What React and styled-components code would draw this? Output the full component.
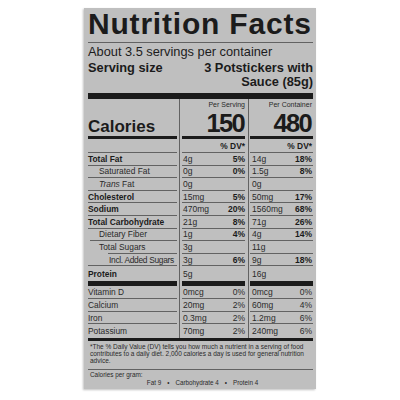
import styled, { createGlobalStyle } from "styled-components";

const GlobalStyle = createGlobalStyle`
  html, body {
    margin: 0;
    padding: 0;
    background: #fff;
  }
  body {
    font-family: "Liberation Sans", Arial, sans-serif;
    color: #1c1c1c;
  }
`;

const INK = "#1b1b1b";
const RULE = "#626262";

const Page = styled.div`
  width: 400px;
  height: 400px;
  box-sizing: border-box;
  padding-top: 8px;
  display: flex;
  justify-content: center;
`;

const Label = styled.section`
  width: 232px;
  height: 381px;
  box-sizing: border-box;
  padding: 1px 3px 0 4px;
  background: #bfbfbf;
  box-shadow: -1px 1px 2px rgba(0, 0, 0, 0.25);
`;

const Title = styled.h1`
  margin: 0;
  padding-bottom: 3px;
  border-bottom: 1px solid ${RULE};
  font-size: 30px;
  line-height: 30px;
  font-weight: 700;
  letter-spacing: 0.8px;
  white-space: nowrap;
  color: ${INK};
`;

const Servings = styled.div`
  margin-top: 2px;
  font-size: 12.8px;
  line-height: 14px;
  white-space: nowrap;
`;

const ServingSize = styled.div`
  margin-top: 2px;
  display: flex;
  justify-content: space-between;
  font-size: 12.8px;
  line-height: 14px;
  font-weight: 700;
  color: ${INK};

  span:last-child {
    text-align: right;
  }
`;

const Bar = styled.div`
  height: ${(p) => p.$h}px;
  margin-top: ${(p) => p.$mt || 0}px;
  background: ${INK};
`;

const Table = styled.div`
  display: flex;
  flex-direction: column;
  background:
    linear-gradient(${RULE}, ${RULE}) 91px 0 / 1px 100% no-repeat,
    linear-gradient(${RULE}, ${RULE}) 160px 0 / 1px 100% no-repeat;
`;

const Row = styled.div`
  display: grid;
  grid-template-columns: 89px 63px 63px;
  column-gap: 5px;
  height: ${(p) => p.$h}px;
`;

const ruled = (p) => {
  const w = p.$rule || 0;
  const color = w > 1 ? INK : RULE;
  return `
    padding-bottom: ${w}px;
    background: linear-gradient(${color}, ${color}) right bottom /
      calc(100% - ${p.$ruleIndent || 0}px) ${w}px no-repeat;
  `;
};

const Name = styled.div`
  box-sizing: border-box;
  display: flex;
  align-items: center;
  padding-left: ${(p) => p.$indent || 0}px;
  font-size: 8.4px;
  font-weight: ${(p) => (p.$bold ? 700 : 400)};
  letter-spacing: ${(p) => p.$tight || 0}px;
  white-space: nowrap;
  color: ${(p) => (p.$bold ? INK : "#2a2a2a")};
  ${ruled}

  i {
    font-style: italic;
  }
`;

const Amount = styled.div`
  box-sizing: border-box;
  display: flex;
  align-items: center;
  justify-content: space-between;
  padding-left: ${(p) => (p.$second ? 2 : 1)}px;
  padding-right: ${(p) => (p.$second ? 1 : 0)}px;
  font-size: 8.5px;
  white-space: nowrap;
  color: #2a2a2a;
  ${ruled}
`;

const Pct = styled.span`
  font-weight: ${(p) => (p.$light ? 400 : 700)};
  color: ${(p) => (p.$light ? "#2a2a2a" : INK)};
`;

const CaloriesName = styled(Name)`
  align-items: flex-end;
  padding-bottom: 4px;
  font-size: 17px;
  line-height: 17px;
  font-weight: 700;
  color: ${INK};
`;

const CaloriesAmount = styled(Amount)`
  flex-direction: column;
  align-items: flex-end;
  justify-content: space-between;
  padding-top: 2px;
`;

const Per = styled.span`
  font-size: 7px;
  line-height: 8px;
  color: #2a2a2a;
`;

const BigNumber = styled.span`
  font-size: 25.5px;
  line-height: 25px;
  font-weight: 700;
  letter-spacing: -1.7px;
  margin-right: 1px;
  color: ${INK};
`;

const DvHead = styled(Amount)`
  justify-content: flex-end;
  font-size: 8.4px;
  font-weight: 700;
  color: ${INK};
`;

const Footnote = styled.p`
  margin: 0;
  padding: 2px 0 4px 2px;
  border-bottom: 1px solid ${RULE};
  font-size: 6.5px;
  line-height: 7.2px;
  white-space: nowrap;
  color: #2a2a2a;
`;

const PerGram = styled.div`
  margin-top: 1.5px;
  padding-left: 2px;
  font-size: 6.4px;
  line-height: 8px;
  color: #2a2a2a;
`;

const PerGramValues = styled.div`
  display: flex;
  justify-content: center;
  gap: 6px;
  padding-left: 4px;
  font-size: 6.3px;
  line-height: 8px;
  color: #2a2a2a;
`;

const nutrients = [
  { name: "Total Fat", bold: true, a: ["4g", "5%"], b: ["14g", "18%"] },
  { name: "Saturated Fat", indent: 11, a: ["0g", "0%"], b: ["1.5g", "8%"] },
  { name: <span><i>Trans</i> Fat</span>, indent: 11, a: ["0g"], b: ["0g"] },
  { name: "Cholesterol", bold: true, a: ["15mg", "5%"], b: ["50mg", "17%"] },
  { name: "Sodium", bold: true, a: ["470mg", "20%"], b: ["1560mg", "68%"] },
  { name: "Total Carbohydrate", bold: true, a: ["21g", "8%"], b: ["71g", "26%"] },
  { name: "Dietary Fiber", indent: 11, ruleIndent: 2, a: ["1g", "4%"], b: ["4g", "14%"] },
  { name: "Total Sugars", indent: 11, ruleIndent: 20, a: ["3g"], b: ["11g"] },
  { name: "Incl. Added Sugars", indent: 21, tight: -0.3, a: ["3g", "6%"], b: ["9g", "18%"] },
];

const vitamins = [
  { name: "Vitamin D", a: ["0mcg", "0%"], b: ["0mcg", "0%"] },
  { name: "Calcium", a: ["20mg", "2%"], b: ["60mg", "4%"] },
  { name: "Iron", a: ["0.3mg", "2%"], b: ["1.2mg", "6%"] },
  { name: "Potassium", a: ["70mg", "2%"], b: ["240mg", "6%"] },
];

const Values = ({ data, second, rule, light }) => (
  <Amount $second={second} $rule={rule}>
    <span>{data[0]}</span>
    {data[1] && <Pct $light={light}>{data[1]}</Pct>}
  </Amount>
);

export default function App() {
  return (
    <>
      <GlobalStyle />
      <Page>
        <Label>
          <Title>Nutrition Facts</Title>
          <Servings>About 3.5 servings per container</Servings>
          <ServingSize>
            <span>Serving size</span>
            <span>
              3 Potstickers with
              <br />
              Sauce (85g)
            </span>
          </ServingSize>
          <Bar $h={6} $mt={4} />

          <Table>
            <Row $h={40}>
              <CaloriesName $rule={3}>Calories</CaloriesName>
              <CaloriesAmount $rule={3}>
                <Per>Per Serving</Per>
                <BigNumber>150</BigNumber>
              </CaloriesAmount>
              <CaloriesAmount $rule={3} $second>
                <Per>Per Container</Per>
                <BigNumber>480</BigNumber>
              </CaloriesAmount>
            </Row>
            <Row $h={14}>
              <Name $rule={1} />
              <DvHead $rule={1}>% DV*</DvHead>
              <DvHead $rule={1} $second>% DV*</DvHead>
            </Row>

            {nutrients.map((n, i) => (
              <Row key={i} $h={12.6}>
                <Name
                  $rule={1}
                  $bold={n.bold}
                  $indent={n.indent}
                  $ruleIndent={n.ruleIndent}
                  $tight={n.tight}
                >
                  {n.name}
                </Name>
                <Values data={n.a} rule={1} />
                <Values data={n.b} rule={1} second />
              </Row>
            ))}
            <Row $h={20}>
              <Name $rule={5} $bold>
                Protein
              </Name>
              <Values data={["5g"]} rule={5} />
              <Values data={["16g"]} rule={5} second />
            </Row>

            {vitamins.map((v, i) => {
              const last = i === vitamins.length - 1;
              return (
                <Row key={v.name} $h={last ? 13.5 : 12.7}>
                  <Name $rule={last ? 0 : 1}>{v.name}</Name>
                  <Values data={v.a} rule={last ? 0 : 1} light />
                  <Values data={v.b} rule={last ? 0 : 1} second light />
                </Row>
              );
            })}
          </Table>
          <Bar $h={3} />

          <Footnote>
            *The % Daily Value (DV) tells you how much a nutrient in a serving of food
            <br />
            contributes to a daily diet. 2,000 calories a day is used for general nutrition
            <br />
            advice.
          </Footnote>
          <PerGram>Calories per gram:</PerGram>
          <PerGramValues>
            <span>Fat 9</span>
            <span>•</span>
            <span>Carbohydrate 4</span>
            <span>•</span>
            <span>Protein 4</span>
          </PerGramValues>
        </Label>
      </Page>
    </>
  );
}
